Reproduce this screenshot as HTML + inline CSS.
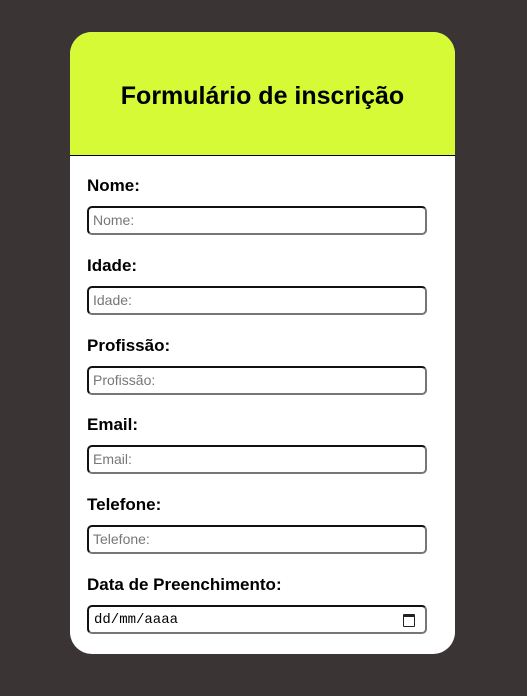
<!DOCTYPE html>
<html><head><meta charset="utf-8"><style>
body{margin:0;width:527px;height:696px;background:#3a3434;font-family:"Liberation Sans",sans-serif;position:relative;overflow:hidden}
.card{position:absolute;left:70px;top:32px;width:385px;height:622px;background:#fff;border-radius:22px;overflow:hidden}
.hd{position:absolute;left:0;top:0;width:385px;height:123px;background:#d6fb36;border-bottom:1px solid #000}
.hd h1{margin:0;position:absolute;left:0;right:0;top:50px;text-align:center;font-size:25px;font-weight:bold;color:#000}
.lb{position:absolute;left:17px;font-size:17px;font-weight:bold;color:#000}
.in{position:absolute;left:17px;width:340px;height:29px;box-sizing:border-box;border:2px solid;border-color:#111 #767676 #767676 #111;border-radius:5px;font-size:14px;color:#777;line-height:25px;padding-left:4px}
.in.d{font-family:"Liberation Mono",monospace;color:#000;font-size:14px;padding-left:5px;line-height:26px}
.cal{position:absolute;right:10px;top:7px;width:10px;height:9px;border:1.5px solid #222;border-top-width:3px;border-radius:1px}
</style></head><body>
<div class="card">
<div class="hd"><h1>Formulário de inscrição</h1></div>
<div class="lb" style="top:144px">Nome:</div><div class="in" style="top:174px">Nome:</div>
<div class="lb" style="top:224px">Idade:</div><div class="in" style="top:254px">Idade:</div>
<div class="lb" style="top:304px">Profissão:</div><div class="in" style="top:334px">Profissão:</div>
<div class="lb" style="top:383px">Email:</div><div class="in" style="top:413px">Email:</div>
<div class="lb" style="top:463px">Telefone:</div><div class="in" style="top:493px">Telefone:</div>
<div class="lb" style="top:543px">Data de Preenchimento:</div><div class="in d" style="top:573px">dd/mm/aaaa<span class="cal"></span></div>
</div>
</body></html>
